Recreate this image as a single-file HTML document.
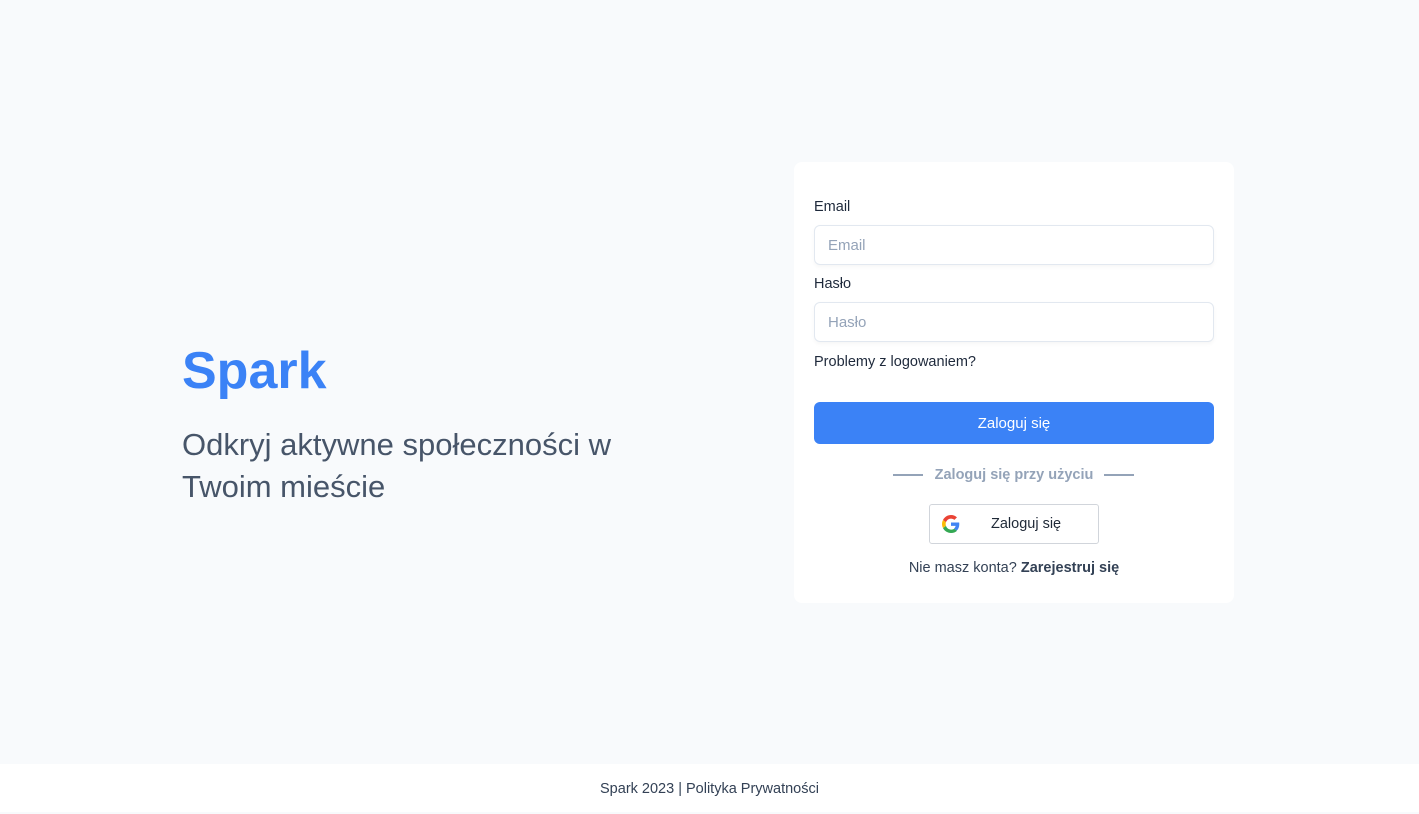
<!DOCTYPE html>
<html><head><meta charset="utf-8"><style>
*{box-sizing:border-box;margin:0;padding:0}
body{width:1419px;height:812px;background:#f8fafc;font-family:"Liberation Sans","DejaVu Sans",sans-serif;position:relative;overflow:hidden;color:#1e293b}
.h1{position:absolute;left:182px;top:341px;font-size:52px;font-weight:bold;color:#3b82f6}
.sub{position:absolute;left:182px;top:424px;font-size:31px;line-height:42px;color:#475569;width:480px}
.card{position:absolute;left:794px;top:162px;width:440px;height:441px;background:#fff;border-radius:8px}
.lbl{position:absolute;left:20px;font-size:14.5px;color:#1e293b}
.inp{position:absolute;left:20px;width:400px;height:40px;border:1px solid #e2e8f0;border-radius:6px;box-shadow:0 2px 4px rgba(0,0,0,.04);font-size:15px;color:#94a3b8;padding:11px 13px}
.btn{position:absolute;left:20px;top:240px;width:400px;height:42px;background:#3b82f6;border-radius:6px;color:#fff;font-size:15px;text-align:center;line-height:44px}
.or{position:absolute;left:0;width:440px;top:305px;text-align:center;font-size:14.5px;color:#94a3b8;font-weight:bold}
.ln{position:absolute;top:312px;width:30px;height:2px;background:#94a3b8}
.g{position:absolute;left:135px;top:342px;width:170px;height:40px;border:1px solid #d1d5db;border-radius:3px;font-size:14.5px;color:#1f2937}
.bot{position:absolute;left:0;width:440px;top:398px;text-align:center;font-size:14.5px;color:#334155}
.foot{position:absolute;left:0;top:764px;width:1419px;height:48px;background:#fff;text-align:center;line-height:50px;font-size:14.5px;color:#334155}
</style></head><body>
<div class="h1">Spark</div>
<div class="sub">Odkryj aktywne społeczności w Twoim mieście</div>
<div class="card">
<div class="lbl" style="top:37px">Email</div>
<div class="inp" style="top:63px">Email</div>
<div class="lbl" style="top:114px">Hasło</div>
<div class="inp" style="top:140px">Hasło</div>
<div class="lbl" style="top:192px">Problemy z logowaniem?</div>
<div class="btn">Zaloguj się</div>
<div class="ln" style="left:99px"></div><div class="ln" style="left:310px"></div>
<div class="or">Zaloguj się przy użyciu</div>
<div class="g">
<svg style="position:absolute;left:12px;top:10px" width="18" height="18" viewBox="0 0 48 48"><path fill="#EA4335" d="M24 9.5c3.5 0 6.6 1.2 9.1 3.6l6.8-6.8C35.8 2.4 30.3 0 24 0 14.6 0 6.6 5.4 2.7 13.3l7.9 6.1C12.5 13.6 17.8 9.5 24 9.5z"/><path fill="#4285F4" d="M46.1 24.5c0-1.6-.1-3.1-.4-4.5H24v9h12.4c-.5 2.9-2.2 5.3-4.6 7l7.3 5.7c4.3-4 7-9.9 7-17.2z"/><path fill="#FBBC05" d="M10.5 28.6c-.5-1.4-.8-3-.8-4.6s.3-3.2.8-4.6l-7.9-6.1C1 16.6 0 20.2 0 24s1 7.4 2.7 10.7l7.8-6.1z"/><path fill="#34A853" d="M24 48c6.5 0 11.9-2.1 15.9-5.8l-7.3-5.7c-2 1.4-4.8 2.4-8.6 2.4-6.2 0-11.5-4.2-13.4-9.9l-7.9 6.1C6.6 42.6 14.6 48 24 48z"/></svg>
<span style="position:absolute;left:61px;top:11px">Zaloguj się</span></div>
<div class="bot">Nie masz konta? <b>Zarejestruj się</b></div>
</div>
<div class="foot">Spark 2023 | Polityka Prywatności</div>
</body></html>
